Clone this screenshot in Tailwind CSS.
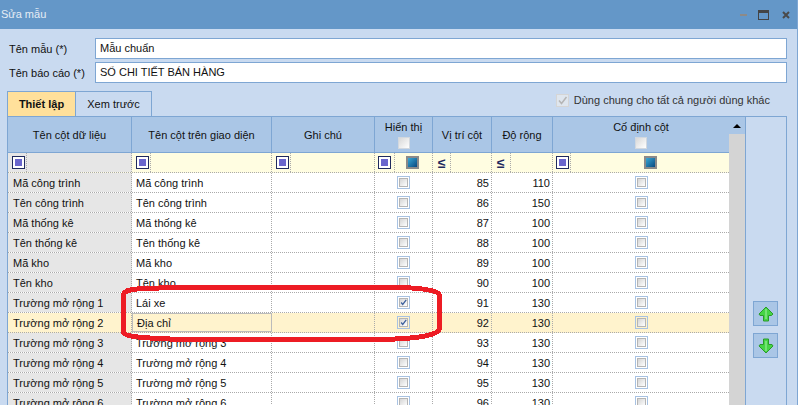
<!DOCTYPE html>
<html lang="vi">
  <head>
    <meta charset="UTF-8" />
    <script src="https://cdn.jsdelivr.net/npm/@tailwindcss/browser@4"></script>
    <title>Sửa mẫu</title>
  </head>
  <body class="bg-[#c9daf0] w-[798px] h-[405px] overflow-hidden relative border-r border-[#7ea6d3] font-['Liberation_Sans',sans-serif] text-[11px] leading-none text-[#111]">
    <!-- TITLE BAR -->
    <div class="h-[29px] bg-[#6497c8] flex items-center justify-between">
      <span class="pl-px text-[11px] text-[#e6edf5]">Sửa mẫu</span>
      <div class="flex items-center">
        <div class="w-[7px] h-[2px] bg-[#8d8a88] mr-[11px]"></div>
        <div class="w-[11px] h-[10px] border border-[#444] border-t-[3px] mr-[13px]"></div>
        <svg class="w-[8px] h-[8px] mr-[7px]" viewBox="0 0 8 8"><path d="M1 1l6 6M7 1l-6 6" stroke="#4a4a4a" stroke-width="2" /></svg>
      </div>
    </div>

    <!-- FORM -->
    <div class="pt-[9px] pl-[9px] pr-[10px] flex flex-col gap-[3px]">
      <div class="flex items-center">
        <label class="w-[86px] pt-[2px]">Tên mẫu (*)</label>
        <div class="flex-1 h-[21px] bg-white border border-[#7ea6d3] flex items-center pl-[4px]">Mẫu chuẩn</div>
      </div>
      <div class="flex items-center">
        <label class="w-[86px] pt-[2px]">Tên báo cáo (*)</label>
        <div class="flex-1 h-[21px] bg-white border border-[#7ea6d3] flex items-center pl-[4px]">SỔ CHI TIẾT BÁN HÀNG</div>
      </div>
    </div>

    <!-- TABS -->
    <div class="mt-[8px] pl-[7px] flex items-stretch h-[25px]">
      <div class="w-[69px] bg-[#ffe09b] border border-b-0 border-[#7ea6d3] flex items-center justify-center font-bold">Thiết lập</div>
      <div class="w-[76px] border border-l-0 border-b-0 border-[#7ea6d3] flex items-center justify-center">Xem trước</div>
      <div class="ml-auto mr-[27px] flex items-center gap-[5px] text-[#333] pb-[7px]">
        <div class="size-[13px] border border-[#d5d5d5] bg-[#dfe6ee] flex items-center justify-center">
          <svg class="size-[11px]" viewBox="0 0 11 11"><path d="M2 5.500l2.500 3L9.500 2" fill="none" stroke="#b5b5b5" stroke-width="1.500" /></svg>
        </div>
        <span>Dùng chung cho tất cả người dùng khác</span>
      </div>
    </div>

    <!-- GRID + SIDE PANEL -->
    <div class="ml-[7px] w-[780px] h-[300px] border border-b-0 border-[#7ea6d3] flex">
      <div class="w-[721px] shrink-0">
        <div id="head" class="grid grid-cols-[124px_140px_103px_58px_59px_61px_176px] h-[36px] bg-[#aac6e6] border-b border-[#7ea6d3]">
          <div class="border-r border-[#7ea6d3] flex items-center justify-center pt-[2px]">Tên cột dữ liệu</div>
          <div class="border-r border-[#7ea6d3] flex items-center justify-center pt-[2px]">Tên cột trên giao diện</div>
          <div class="border-r border-[#7ea6d3] flex items-center justify-center pt-[2px]">Ghi chú</div>
          <div class="border-r border-[#7ea6d3] flex flex-col items-center justify-end pb-[3px] gap-[4px]">
            <span>Hiển thị</span>
            <div class="size-[12px] border border-[#d2d8df] bg-linear-to-br from-[#d8d8d8] to-white"></div>
          </div>
          <div class="border-r border-[#7ea6d3] flex items-center justify-center pt-[2px]">Vị trí cột</div>
          <div class="border-r border-[#7ea6d3] flex items-center justify-center pt-[2px]">Độ rộng</div>
          <div class="flex flex-col items-center justify-end pb-[3px] gap-[4px]">
            <span>Cố định cột</span>
            <div class="size-[12px] border border-[#d2d8df] bg-linear-to-br from-[#d8d8d8] to-white"></div>
          </div>
        </div>

        <!-- FILTER ROW -->
        <div class="grid grid-cols-[124px_140px_103px_58px_59px_61px_176px] h-[20px] bg-[#fffde1] border-b border-dotted border-[#aaa]">
          <div class="bg-[#e6e6e6] border-r border-dotted border-[#aaa] flex items-center pl-[4px]">
            <div class="size-[13px] border border-[#1f2a5e] p-[2px] bg-white"><div class="size-full bg-[#6a66cc]"></div></div>
            <div class="ml-[1px] h-full border-r border-dotted border-[#aaa]"></div>
          </div>
          <div class="border-r border-dotted border-[#aaa] flex items-center pl-[4px]">
            <div class="size-[13px] border border-[#1f2a5e] p-[2px] bg-white"><div class="size-full bg-[#6a66cc]"></div></div>
            <div class="ml-[1px] h-full border-r border-dotted border-[#aaa]"></div>
          </div>
          <div class="border-r border-dotted border-[#aaa] flex items-center pl-[4px]">
            <div class="size-[13px] border border-[#1f2a5e] p-[2px] bg-white"><div class="size-full bg-[#6a66cc]"></div></div>
            <div class="ml-[1px] h-full border-r border-dotted border-[#aaa]"></div>
          </div>
          <div class="border-r border-dotted border-[#aaa] flex items-center pl-[3px]">
            <div class="size-[13px] shrink-0 border border-[#1f2a5e] p-[2px] bg-white"><div class="size-full bg-[#6a66cc]"></div></div>
            <div class="ml-[3px] h-full border-r border-dotted border-[#aaa]"></div>
            <div class="ml-[11px] size-[13px] shrink-0 border-2 border-[#8a8a8a] bg-linear-to-br from-[#39a9d6] to-[#0b4a80]"></div>
          </div>
          <div class="border-r border-dotted border-[#aaa] flex items-center pl-[5px]">
            <span class="w-[12px] text-[#1f2a5e] text-[14px] leading-none font-bold">≤</span>
            <div class="h-full border-r border-dotted border-[#aaa]"></div>
          </div>
          <div class="border-r border-dotted border-[#aaa] flex items-center pl-[5px]">
            <span class="w-[13px] text-[#1f2a5e] text-[14px] leading-none font-bold">≤</span>
            <div class="h-full border-r border-dotted border-[#aaa]"></div>
          </div>
          <div class="flex items-center pl-[3px]">
            <div class="size-[13px] shrink-0 border border-[#1f2a5e] p-[2px] bg-white"><div class="size-full bg-[#6a66cc]"></div></div>
            <div class="ml-[1px] h-full border-r border-dotted border-[#aaa]"></div>
            <div class="ml-[73px] size-[13px] shrink-0 border-2 border-[#8a8a8a] bg-linear-to-br from-[#39a9d6] to-[#0b4a80]"></div>
          </div>
        </div>

        <!-- DATA ROWS -->
        <div id="rows"></div>
      </div>

      <!-- SCROLLBAR -->
      <div class="w-[17px] shrink-0 bg-[#d4d4d4] border-r border-[#7ea6d3]">
        <div class="h-[17px] bg-[#aac6e6] flex items-center justify-center">
          <div class="w-0 h-0 border-x-[4px] border-x-transparent border-b-[4px] border-b-black"></div>
        </div>
      </div>

      <!-- MOVE BUTTONS -->
      <div class="flex-1 flex flex-col items-center pt-[184px] gap-[7px] pr-[1px]">
        <button class="size-[25px] bg-[#aac6e6] border border-[#7ea6d3] flex items-center justify-center">
          <svg class="size-[16px]" viewBox="0 0 16 16"><path d="M8 1l7 7-1.500 1.500H10.500V15h-5V9.500H2L1 8z" fill="#45d445" stroke="#2a9a2a" /><path d="M8 3v10" stroke="#a6f0a6" /></svg>
        </button>
        <button class="size-[25px] bg-[#aac6e6] border border-[#7ea6d3] flex items-center justify-center">
          <svg class="size-[16px]" viewBox="0 0 16 16"><path d="M8 15L1 8l1-1.500h3.500V1h5v5.500H14L15 8z" fill="#45d445" stroke="#2a9a2a" /><path d="M8 3v10" stroke="#a6f0a6" /></svg>
        </button>
      </div>
    </div>

    <!-- RED MARK DRAWN OVER THE GRID -->
    <svg class="absolute left-0 top-0 pointer-events-none" width="798" height="405" shape-rendering="crispEdges">
      <path d="M123.500 296C123.500 291 128 290 137 289L170 287.500H400C420 288 438 290 439.500 295V329C438 335 420 338 395 339H170C145 338 124 337 123.500 332Z" fill="none" stroke="#ed1c24" stroke-width="5" />
    </svg>

    <script>
      const rows = [
        ['Mã công trình', 'Mã công trình', 85, 110],
        ['Tên công trình', 'Tên công trình', 86, 150],
        ['Mã thống kê', 'Mã thống kê', 87, 100],
        ['Tên thống kê', 'Tên thống kê', 88, 100],
        ['Mã kho', 'Mã kho', 89, 100],
        ['Tên kho', 'Tên kho', 90, 100],
        ['Trường mở rộng 1', 'Lái xe', 91, 130, true],
        ['Trường mở rộng 2', 'Địa chỉ', 92, 130, true, true],
        ['Trường mở rộng 3', 'Trường mở rộng 3', 93, 130],
        ['Trường mở rộng 4', 'Trường mở rộng 4', 94, 130],
        ['Trường mở rộng 5', 'Trường mở rộng 5', 95, 130],
        ['Trường mở rộng 6', 'Trường mở rộng 6', 96, 130],
      ]
      const tick = '<svg class="size-full" viewBox="0 0 9 9"><path d="M1.500 4.500l2 2.500L8 1" fill="none" stroke="#3c5f9b" stroke-width="1.600" /></svg>'
      const box = (on) => `<div class="size-[13px] border border-[#a8c2e2] p-px"><div class="size-full border border-[#b5b5b5] bg-linear-to-br from-[#d5d5d5] to-white">${on ? tick : ''}</div></div>`
      document.getElementById('rows').innerHTML = rows.map(([a, b, pos, w, on, sel]) => `
        <div class="grid grid-cols-[124px_140px_103px_58px_59px_61px_176px] h-[20px] border-b border-dotted border-[#aaa] ${sel ? 'bg-[#fff3cd]' : 'bg-white'}">
          <div class="${sel ? '' : 'bg-[#e6e6e6]'} border-r border-dotted border-[#aaa] flex items-center pl-[5px] pt-px">${a}</div>
          <div class="${sel ? 'border border-[#bbb]' : 'border-r border-dotted border-[#aaa]'} flex items-center pl-[4px] pt-px">${b}</div>
          <div class="border-r border-dotted border-[#aaa]"></div>
          <div class="border-r border-dotted border-[#aaa] flex items-center justify-center">${box(on)}</div>
          <div class="border-r border-dotted border-[#aaa] flex items-center justify-end pr-[2px] pt-px">${pos}</div>
          <div class="border-r border-dotted border-[#aaa] flex items-center justify-end pr-[2px] pt-px">${w}</div>
          <div class="flex items-center justify-center">${box(false)}</div>
        </div>`).join('')
    </script>
  </body>
</html>
